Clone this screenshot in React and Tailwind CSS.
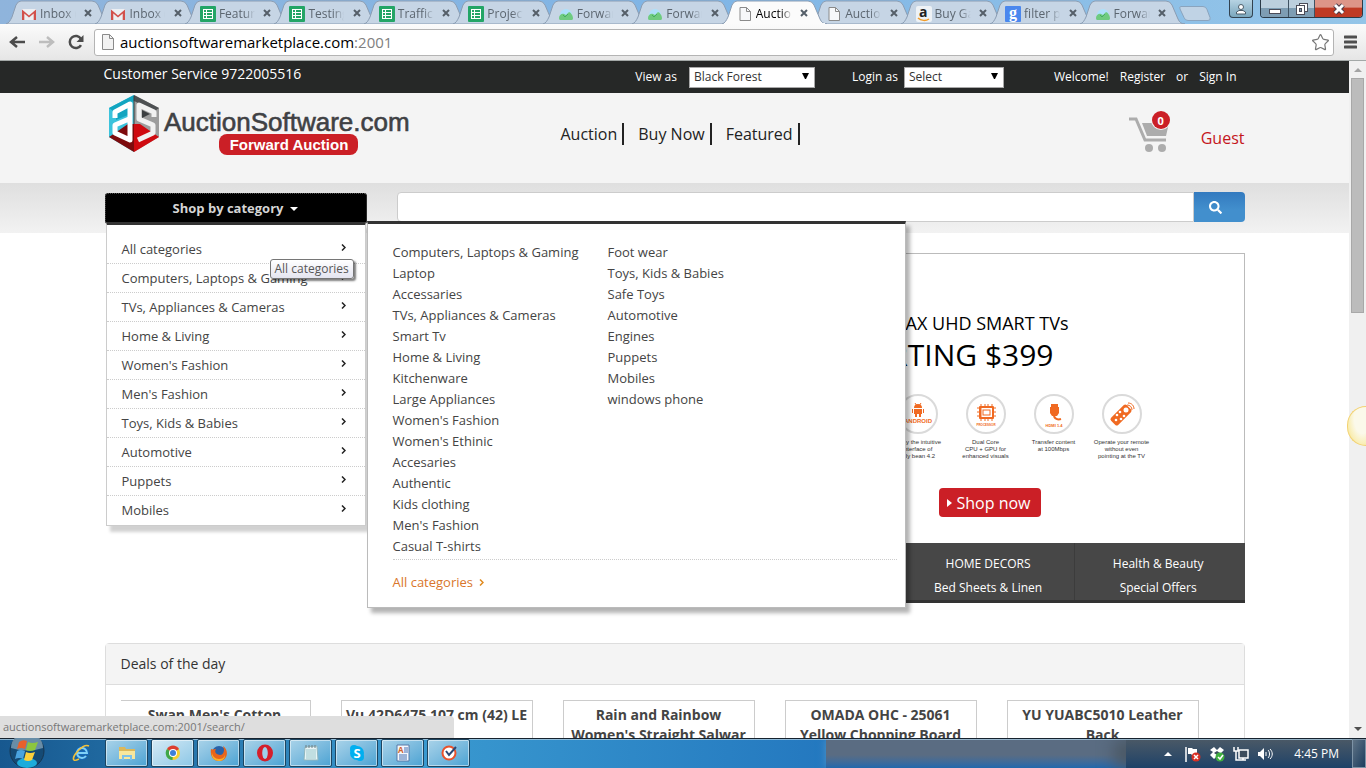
import { Star } from 'lucide-react'
import { FaSearch } from 'react-icons/fa'

const TABS = [
  { icon: 'gmail', label: 'Inbox (1)' },
  { icon: 'gmail', label: 'Inbox (1)' },
  { icon: 'sheet', label: 'Feature' },
  { icon: 'sheet', label: 'Testing' },
  { icon: 'sheet', label: 'Traffic' },
  { icon: 'sheet', label: 'Project' },
  { icon: 'hill', label: 'Forward' },
  { icon: 'hill', label: 'Forward' },
  { icon: 'page', label: 'Auction', active: true },
  { icon: 'page', label: 'Auction' },
  { icon: 'amazon', label: 'Buy Gar' },
  { icon: 'google', label: 'filter pl' },
  { icon: 'hill', label: 'Forward' },
]

const CATEGORIES = [
  'All categories',
  'Computers, Laptops & Gaming',
  'TVs, Appliances & Cameras',
  'Home & Living',
  "Women's Fashion",
  "Men's Fashion",
  'Toys, Kids & Babies',
  'Automotive',
  'Puppets',
  'Mobiles',
]

const MEGA_COLUMNS = [
  [
    'Computers, Laptops & Gaming',
    'Laptop',
    'Accessaries',
    'TVs, Appliances & Cameras',
    'Smart Tv',
    'Home & Living',
    'Kitchenware',
    'Large Appliances',
    "Women's Fashion",
    "Women's Ethinic",
    'Accesaries',
    'Authentic',
    'Kids clothing',
    "Men's Fashion",
    'Casual T-shirts',
  ],
  ['Foot wear', 'Toys, Kids & Babies', 'Safe Toys', 'Automotive', 'Engines', 'Puppets', 'Mobiles', 'windows phone'],
]

const DEALS = [
  ["Swan Men's Cotton", 'Shirt'],
  ['Vu 42D6475 107 cm (42) LE', 'TV'],
  ['Rain and Rainbow', "Women's Straight Salwar"],
  ['OMADA OHC - 25061', 'Yellow Chopping Board'],
  ['YU YUABC5010 Leather', 'Back'],
]

function TabIcon({ name }) {
  if (name === 'gmail')
    return (
      <svg width="16" height="16" viewBox="0 0 16 16">
        <rect x="1" y="3" width="14" height="11" fill="#eceff3" />
        <path d="M1 14V3.500l7 6 7-6V14h-2.300V7.500L8 11.500 3.300 7.500V14z" fill="#d2504b" />
      </svg>
    )
  if (name === 'sheet')
    return (
      <svg width="16" height="16" viewBox="0 0 16 16">
        <rect width="16" height="16" rx="1" fill="#23a566" />
        <path d="M3 3h10v10H3z" fill="#fff" />
        <path d="M4 4h2v2H4zM7 4h5v2H7zM4 7h2v2H4zM7 7h5v2H7zM4 10h2v2H4zM7 10h5v2H7z" fill="#23a566" />
      </svg>
    )
  if (name === 'hill')
    return (
      <svg width="16" height="16" viewBox="0 0 16 16">
        <path d="M2 9a6 6 0 0 1 12 0z" fill="#aee0fa" />
        <path d="M1 12c0-3 3-5 5-4l2 1 3-3c1 0 4 3 4 6 0 2-1 2-2 2H3c-1 0-2 0-2-2z" fill="#6fcb7f" />
        <path d="m5 9 2 2 3-3" fill="none" stroke="#45ad62" />
      </svg>
    )
  if (name === 'page')
    return (
      <svg width="16" height="16" viewBox="0 0 16 16">
        <path d="M3 1.500h6.500l4 4v9H3z" fill="#f7f8fa" stroke="#8a8a8a" />
        <path d="M9.500 1.500v4h4" fill="none" stroke="#8a8a8a" />
      </svg>
    )
  if (name === 'amazon')
    return (
      <svg width="16" height="16" viewBox="0 0 16 16">
        <rect width="16" height="16" rx="2" fill="#eef2f6" />
        <text x="3" y="11" fontSize="14" fontWeight="700" fontFamily="Open Sans, sans-serif" fill="#222">a</text>
        <path d="M2 12c3 3 8 3 11 1" fill="none" stroke="#f29b26" strokeWidth="1.500" />
      </svg>
    )
  return (
    <svg width="16" height="16" viewBox="0 0 16 16">
      <rect width="16" height="16" rx="1" fill="#4a87ee" />
      <text x="4" y="12" fontSize="16" fontWeight="700" fontFamily="Liberation Serif, serif" fill="#fff">g</text>
    </svg>
  )
}

function Tab({ icon, label, active }) {
  return (
    <div className={`relative flex items-center ${active ? 'z-10' : ''}`}>
      <svg className="absolute top-0 left-0 h-6 w-[106px]" viewBox="0 0 106 24" preserveAspectRatio="none">
        <path
          d="M0 24C3 23 4 21 6 17L10 5Q12 1 15 1H86Q90 1 92 5L98 19Q100 24 105 24Z"
          fill={active ? '#fbfbfb' : '#c6d5e5'}
          stroke="#8b9db3"
        />
        {active && <path d="M2 24H103" stroke="#fbfbfb" strokeWidth="2" />}
      </svg>
      <button className="relative flex w-full items-center pt-[3px] pl-[15px] text-left">
        <span className="shrink-0"><TabIcon name={icon} /></span>
        <span className={`ml-[3px] w-[36px] overflow-hidden text-[12px] leading-4 whitespace-nowrap [mask-image:linear-gradient(to_right,black_70%,transparent)] ${active ? 'text-black' : 'text-[#5c6670]'}`}>
          {label}
        </span>
      </button>
      <button aria-label="Close tab" className="absolute top-[9px] right-[3px]">
        <svg width="8" height="8" viewBox="0 0 8 8"><path d="m1 1 6 6m0-6L1 7" stroke="#555f69" strokeWidth="2" /></svg>
      </button>
    </div>
  )
}

function WindowButtons() {
  return (
    <div className="absolute top-0 right-[3px] flex items-start gap-[7px]">
      <button aria-label="User" className="grid h-[18px] w-6 place-items-center rounded-b border border-t-0 border-[#32424f] bg-linear-to-b from-[#b6d3e3] to-[#7ba7bd]">
        <svg width="12" height="12" viewBox="0 0 12 12">
          <path d="M1.500 11V9L4 7.500h4L10.500 9v2z" fill="#fff" stroke="#4b5c68" />
          <circle cx="6" cy="4" r="2.500" fill="#fff" stroke="#4b5c68" />
        </svg>
      </button>
      <div className="flex h-[18px] overflow-hidden rounded-b border border-t-0 border-[#2b3a47]">
        <button aria-label="Minimize" className="grid w-7 place-items-center border-r border-[#3f5262] bg-linear-to-b from-[#bccfdd] from-45% to-[#7e9db3] to-50%">
          <svg width="12" height="12" viewBox="0 0 12 12"><rect x="0.500" y="6.500" width="11" height="4" fill="#fff" stroke="#4b4c58" /></svg>
        </button>
        <button aria-label="Restore" className="grid w-[26px] place-items-center border-r border-[#3f5262] bg-linear-to-b from-[#bccfdd] from-45% to-[#7e9db3] to-50%">
          <svg width="12" height="12" viewBox="0 0 12 12" fill="#fff" stroke="#4b4c58">
            <rect x="3.500" y="0.500" width="8" height="8" />
            <rect x="0.500" y="2.500" width="8" height="9" />
            <rect x="3.500" y="5.500" width="2" height="3" fill="#7e9db3" />
          </svg>
        </button>
        <button aria-label="Close" className="grid w-[47px] place-items-center bg-linear-to-b from-[#dd9588] from-40% to-[#bf3a24] to-50%">
          <svg width="14" height="12" viewBox="0 0 14 12">
            <path d="m3 2 8 8m0-8-8 8" stroke="#4b3b48" strokeWidth="5" />
            <path d="m3 2 8 8m0-8-8 8" stroke="#fff" strokeWidth="3" />
          </svg>
        </button>
      </div>
    </div>
  )
}

function BrowserChrome() {
  return (
    <header className="shrink-0 border-b border-[#a3a8a7]">
      <div className="relative h-6 bg-linear-to-r from-[#8fb4dc] via-[#7fb5e6] to-[#94c5e8] pl-[6px]">
        <div className="grid h-6 w-[1163px] grid-cols-13">
          {TABS.map((t, i) => <Tab key={i} {...t} />)}
        </div>
        <button aria-label="New tab" className="absolute top-[6px] left-[1179px]">
          <svg width="32" height="15" viewBox="0 0 32 15">
            <path d="M2 .500h22q3 0 4 3l3 8q1 3-2 3H9q-3 0-4-3L1 3q-1-2.500 1-2.500z" fill="#c0d3e5" stroke="#8aa4be" />
          </svg>
        </button>
        <WindowButtons />
      </div>
      <div className="flex h-9 items-center bg-linear-to-b from-[#fbfbfb] to-[#e6e6e6] pr-[9px] pl-2">
        <button aria-label="Back">
          <svg width="18" height="16" viewBox="0 0 18 16"><path d="M17 8H3m6-5L3 8l6 5" fill="none" stroke="#4c4c4c" strokeWidth="2.500" /></svg>
        </button>
        <button aria-label="Forward" className="ml-3">
          <svg width="18" height="16" viewBox="0 0 18 16"><path d="M1 8h14M9 3l6 5-6 5" fill="none" stroke="#bdbdbd" strokeWidth="2.500" /></svg>
        </button>
        <button aria-label="Reload" className="ml-3">
          <svg width="16" height="16" viewBox="0 0 16 16">
            <path d="M13 11a6 6 0 1 1 0-6" fill="none" stroke="#4c4c4c" strokeWidth="2.500" />
            <path d="M15.500 1v7h-7z" fill="#4c4c4c" />
          </svg>
        </button>
        <div className="relative ml-[10px] h-[27px] flex-1 rounded-[3px] border border-[#b4b4b4] bg-white">
          <div className="flex h-full items-center pl-[5px]">
            <svg width="16" height="16" viewBox="0 0 16 16">
              <path d="M2.500.500h7l4 4v11h-11z" fill="#f2f2f2" stroke="#8a8a8a" />
              <path d="M9.500.500v4h4" fill="none" stroke="#8a8a8a" />
            </svg>
            <p className="ml-1 text-[15px] leading-5 text-black">
              auctionsoftwaremarketplace.com<span className="text-[#808080]">:2001</span>
            </p>
          </div>
          <button aria-label="Bookmark" className="absolute top-[3px] right-[3px]">
            <Star size={19} strokeWidth={1.5} color="#777" />
          </button>
        </div>
        <button aria-label="Menu" className="ml-[10px]">
          <svg width="13" height="14" viewBox="0 0 13 14"><path d="M1 2h11M1 7h11M1 12h11" stroke="#4f4f4f" strokeWidth="3" strokeLinecap="round" /></svg>
        </button>
      </div>
    </header>
  )
}

function TopSelect({ id, label, value, width, className }) {
  return (
    <div className={`flex items-center ${className}`}>
      <label htmlFor={id}>{label}</label>
      <div className={`relative ${width}`}>
        <select id={id} className="block h-[21px] w-full appearance-none border border-[#a9a9a9] bg-white pl-1 text-[12px] leading-4 text-[#333]">
          <option>{value}</option>
        </select>
        <svg className="pointer-events-none absolute top-[6px] right-[6px]" width="7" height="6" viewBox="0 0 7 6"><path d="M0 0h7L4 6H3z" /></svg>
      </div>
    </div>
  )
}

function TopBar() {
  return (
    <div className="bg-[#262827] text-white">
      <div className="mx-auto flex h-8 max-w-[1142px] items-center pr-[9px] text-[12px]">
        <p className="self-start pt-[3px] text-[14px] leading-5">Customer Service 9722005516</p>
        <div className="ml-auto flex items-center">
          <TopSelect id="view-as" label="View as" value="Black Forest" width="ml-3 w-[126px]" className="" />
          <TopSelect id="login-as" label="Login as" value="Select" width="ml-[6px] w-[100px]" className="ml-[37px]" />
          <span className="ml-[50px]">Welcome!</span>
          <a href="#register" className="ml-[11px]">Register</a>
          <span className="ml-[11px]">or</span>
          <a href="#signin" className="ml-[11px]">Sign In</a>
        </div>
      </div>
    </div>
  )
}

function Logo() {
  return (
    <svg width="310" height="62" viewBox="0 0 310 62" role="img" aria-label="AuctionSoftware.com Forward Auction">
      {/* hexagonal cube */}
      <path d="M29 0 4 13v29l25 15z" fill="#3cc3dc" />
      <path d="M29 0 4 13l4 3 21-10z" fill="#12a5c0" />
      <path d="M11 19l12-6v7l-12 5z" fill="#12a5c0" />
      <path d="M29 0l25 13v29L29 57z" fill="#9d9d9d" />
      <path d="M29 0l25 13-4 3-21-10z" fill="#4d5052" />
      <path d="M4 42l6-4 13-9h6v28z" fill="#7d0b0d" />
      <path d="M54 42l-6-4-13-9h-6v28z" fill="#cf0a10" />
      {/* letters folded over the two faces */}
      <path d="M10 23v-6l15-8v36l-15-7v-8l14-6" fill="none" stroke="#fff" strokeWidth="5" strokeLinejoin="round" />
      <path d="M49 22v-5L34 10v14l14 6v8l-15 7" fill="none" stroke="#f1f1f1" strokeWidth="5" strokeLinejoin="round" />
      <path d="M37 15l8 4-8 4z" fill="#3c3f41" />
      <path d="M29 1v28" stroke="#3a3a3a" />
      <text x="59" y="36" fontSize="26" fontFamily="Liberation Sans, Arial, sans-serif" fill="#3f4144" stroke="#3f4144" strokeWidth="0.600">
        AuctionSoftware.com
      </text>
      <rect x="114" y="39" width="139" height="21" rx="8" fill="#cb1f26" />
      <text x="184" y="55" textAnchor="middle" fontSize="15" fontWeight="700" fontFamily="Liberation Sans, Arial, sans-serif" fill="#fff">
        Forward Auction
      </text>
    </svg>
  )
}

function SiteHeader() {
  return (
    <div className="bg-[#f4f4f4]">
      <div className="mx-auto flex h-[90px] max-w-[1140px] items-start">
        <a href="#home" className="mt-[2px]"><Logo /></a>
        <nav className="mt-[30px] ml-[146px] flex gap-[14px] text-[16px] leading-[22px] text-[#222]">
          {['Auction', 'Buy Now', 'Featured'].map((item) => (
            <a key={item} href="#nav" className="border-r-2 border-[#222] pr-[5px]">{item}</a>
          ))}
        </nav>
        <a href="#cart" aria-label="Cart" className="relative mt-[18px] ml-auto">
          <svg width="42" height="43" viewBox="0 0 42 43">
            <path d="M0 8h7l9 21h21" fill="none" stroke="#acacac" strokeWidth="3" />
            <path d="M13 12h27l-3 13H18z" fill="#acacac" />
            <circle cx="20" cy="37" r="4" fill="#acacac" />
            <circle cx="33" cy="37" r="4" fill="#acacac" />
            <circle cx="32" cy="9" r="10" fill="#f4f4f4" />
          </svg>
          <span className="absolute top-0 right-px grid size-[18px] place-items-center rounded-full bg-[#cb1f26] text-[11px] leading-none font-bold text-white">0</span>
        </a>
        <a href="#account" className="mt-[34px] ml-[30px] text-[16px] leading-[22px] text-[#c4161c]">Guest</a>
      </div>
    </div>
  )
}

function Chevron({ color = '#222' }) {
  return (
    <svg width="5" height="7" viewBox="0 0 5 7"><path d="m1 .500 3 3-3 3" fill="none" stroke={color} strokeWidth="1.500" /></svg>
  )
}

function CategoryMenu() {
  return (
    <div className="relative">
      <button className="flex h-[31px] w-full items-center justify-center gap-[7px] rounded-[3px] border border-dotted border-[#555] bg-black text-[13px] font-bold text-[#d5d5d5]">
        Shop by category
        <svg width="8" height="4" viewBox="0 0 8 4"><path d="M0 0h8L4 4z" fill="#fff" /></svg>
      </button>
      <ul className="absolute top-[29px] left-[1px] z-20 w-[260px] border border-t-3 border-[#ccc] border-t-[#333] bg-white pt-[10px] pb-px shadow-[4px_6px_3px_rgba(0,0,0,0.18)]">
        {CATEGORIES.map((name) => (
          <li key={name} className="border-b border-dotted border-[#ccc] last:border-b-0">
            <a href="#category" className="flex h-7 items-start justify-between pt-1 pr-[19px] pl-[15px] text-[13px] leading-5 text-[#444]">
              {name}
              <span className="pt-[5px] leading-none"><Chevron /></span>
            </a>
          </li>
        ))}
      </ul>
      <div className="absolute top-7 left-[262px] z-20 w-[539px] border border-t-3 border-[#bbb] border-t-[#333] bg-white pt-[18px] pr-2 pb-[14px] pl-[25px] shadow-[4px_5px_4px_rgba(0,0,0,0.3)]">
        <div className="flex border-b border-dotted border-[#ccc] pb-[2px]">
          {MEGA_COLUMNS.map((column, i) => (
            <ul key={i} className="w-[215px] text-[13px] leading-[21px] text-[#444]">
              {column.map((name) => <li key={name}><a href="#category">{name}</a></li>)}
            </ul>
          ))}
        </div>
        <a href="#all" className="mt-[11px] flex items-center gap-[6px] text-[13px] leading-[22px] text-[#d9762b]">
          All categories <Chevron color="#e08a1e" />
        </a>
      </div>
      <span className="absolute top-[66px] left-[165px] z-30 rounded-[3px] border border-[#767676] bg-linear-to-b from-white to-[#e4e5f0] px-1 text-[12px] leading-[18px] whitespace-nowrap text-[#575757] shadow-[2px_2px_2px_rgba(0,0,0,0.5)]">
        All categories
      </span>
    </div>
  )
}

function SearchBand() {
  return (
    <div className="bg-linear-to-b from-[#dfdfdf] to-[#f2f2f2]">
      <div className="mx-auto grid h-[50px] max-w-[1140px] grid-cols-[262px_1fr] gap-[30px] pt-[10px]">
        <CategoryMenu />
        <form className="-mt-px flex h-[30px]">
          <input aria-label="Search" type="text" className="min-w-0 flex-1 rounded-l border border-[#ccc] bg-white px-3 text-[13px]" />
          <button type="button" aria-label="Search" className="grid w-[51px] place-items-center rounded-r bg-linear-to-b from-[#337abf] to-[#428fcd] to-60% pr-2 text-white">
            <FaSearch size={13} />
          </button>
        </form>
      </div>
    </div>
  )
}

const FEATURES = [
  { icon: 'android', lines: ['Enjoy the intuitive', 'interface of', 'jelly bean 4.2'] },
  { icon: 'cpu', lines: ['Dual Core', 'CPU + GPU for', 'enhanced visuals'] },
  { icon: 'hdmi', lines: ['Transfer content', 'at 100Mbps'] },
  { icon: 'remote', lines: ['Operate your remote', 'without even', 'pointing at the TV'] },
]

function FeatureIcon({ name }) {
  return (
    <svg width="42" height="42" viewBox="0 0 42 42" fill="#f06a22" fontFamily="Liberation Sans, sans-serif" fontWeight="700" textAnchor="middle">
      <circle cx="21" cy="21" r="19" fill="#fff" stroke="#dadada" strokeWidth="2" />
      {name === 'android' && (
        <>
          <path d="M17 15a4 4 0 0 1 8 0zM17 16h8v5h-8zM15 16h1v4h-1zM26 16h1v4h-1zM18 21h2v3h-2zM22 21h2v3h-2z" />
          <path d="m18 10 2 3m4-3-2 3" stroke="#f06a22" />
          <text x="21" y="30" fontSize="6">ANDROID</text>
        </>
      )}
      {name === 'cpu' && (
        <>
          <rect x="14" y="13" width="15" height="13" rx="1" />
          <rect x="16" y="15" width="11" height="9" fill="#fff" />
          <rect x="18" y="17" width="7" height="5" fill="none" stroke="#f06a22" />
          <path d="M16 11v17m4-17v2m3-2v2m4-2v2M20 26v2m3-2v2m4-2v2M12 15h2m-2 4h2m-2 4h2m15-8h2m-2 4h2m-2 4h2" stroke="#f06a22" />
          <text x="21" y="33" fontSize="3">PROCESSOR</text>
        </>
      )}
      {name === 'hdmi' && (
        <>
          <path d="M18 11h7v3h1v6l-2 3h-5l-2-3v-6h1z" />
          <path d="M21 22c0 4 4 5 7 4" fill="none" stroke="#f06a22" strokeWidth="2" />
          <text x="21" y="34" fontSize="4">HDMI 1.4</text>
        </>
      )}
      {name === 'remote' && (
        <>
          <rect x="15" y="11" width="10" height="22" rx="2" transform="rotate(45 20 22)" />
          <g fill="#fff">
            <circle cx="25" cy="17" r="2.500" /><circle cx="19" cy="19" r="1.300" /><circle cx="23" cy="23" r="1.300" />
            <circle cx="16" cy="22" r="1.300" /><circle cx="20" cy="26" r="1.300" /><circle cx="15" cy="27" r="1.300" />
          </g>
          <path d="M26 12c3 0 5 2 5 5M27 10c4 0 6 3 6 6" fill="none" stroke="#f06a22" />
        </>
      )}
    </svg>
  )
}

function Banner() {
  return (
    <div className="mx-auto mt-5 grid max-w-[1140px] grid-cols-[262px_1fr] gap-[30px]">
      <section className="col-start-2 h-[350px]">
        <div className="flex h-[290px] flex-col items-end border border-b-0 border-[#bbb] pt-[57px] text-black">
          <p className="mr-[175px] text-[18px] leading-6">MAX UHD SMART TVs</p>
          <p className="mr-[190px] text-[30px] leading-10">STARTING $399</p>
          <div className="mt-[18px] mr-[88px] grid grid-cols-[repeat(4,68px)]">
            {FEATURES.map((f) => (
              <div key={f.icon} className="flex flex-col items-center">
                <FeatureIcon name={f.icon} />
                <p className="mt-1 text-center font-['Liberation_Sans',Arial,sans-serif] text-[6px] leading-[7px] whitespace-nowrap text-[#333]">
                  {f.lines.map((line) => <span key={line} className="block">{line}</span>)}
                </p>
              </div>
            ))}
          </div>
          <button className="mt-7 mr-[203px] flex h-[29px] items-center gap-[5px] rounded bg-[#cb1f26] pr-[10px] pl-2 text-[16px] text-white">
            <svg width="5" height="8" viewBox="0 0 5 8"><path d="m0 0 5 4-5 4z" fill="#fff" /></svg>
            Shop now
          </button>
        </div>
        <div className="grid h-[60px] grid-cols-5 border-b-3 border-[#333] bg-[#474747] text-center text-[12px] leading-6 text-white">
          <div className="col-start-4 border-r border-[#3c3c3c] pt-[9px] pr-[3px]"><p>HOME DECORS</p><p>Bed Sheets &amp; Linen</p></div>
          <div className="pt-[9px] pr-[3px]"><p>Health &amp; Beauty</p><p>Special Offers</p></div>
        </div>
      </section>
    </div>
  )
}

function Deals() {
  return (
    <section className="mx-auto mt-10 max-w-[1140px] rounded-t border border-[#ddd]">
      <h2 className="border-b border-[#ddd] bg-[#f4f4f4] px-[15px] py-[10px] text-[14px] leading-5 text-[#333]">Deals of the day</h2>
      <div className="mx-[15px] overflow-hidden pt-[15px]">
        <div className="-ml-[2px] flex gap-[30px]">
          {DEALS.map(([first, second]) => (
            <article key={first} className="h-[280px] w-[192px] shrink-0 border border-[#ccc] pt-1 text-center text-[14px] leading-5 font-bold whitespace-nowrap text-[#444]">
              <p>{first}</p>
              <p>{second}</p>
            </article>
          ))}
        </div>
      </div>
    </section>
  )
}

function Scrollbar() {
  return (
    <div className="flex w-[17px] shrink-0 flex-col items-center bg-[#f0f0f0]">
      <svg className="mt-[7px]" width="8" height="4" viewBox="0 0 8 4"><path d="m0 4 4-4 4 4z" fill="#a3a3a3" /></svg>
      <div className="mt-[6px] h-[235px] w-[13px] border border-[#a8a8a8] bg-[#bcbcbc]" />
      <svg className="mt-auto mb-[7px]" width="8" height="4" viewBox="0 0 8 4"><path d="m0 0 4 4 4-4z" fill="#505050" /></svg>
    </div>
  )
}

function TaskIcon({ name }) {
  return (
    <svg width="18" height="18" viewBox="0 0 18 18">
      {name === 'ie' && (
        <>
          <path d="M14 12a5 5 0 1 1 1-3H6" fill="none" stroke="#1568b8" strokeWidth="4" />
          <path d="M14 12a5 5 0 1 1 1-3H6" fill="none" stroke="#7fd0f7" strokeWidth="2" />
          <path d="M2 16C-1 13 11-1 17 2M2 16c1 1 3 0 5-1" fill="none" stroke="#f3c13a" strokeWidth="1.500" />
        </>
      )}
      {name === 'explorer' && (
        <>
          <path d="M1 3h6l1 2h9v10H1z" fill="#dcb85a" />
          <path d="M1 7h16v8H1z" fill="#f8e79d" />
          <path d="M4 16v-5h10v5h-2v-3H6v3z" fill="#7ec2ea" />
        </>
      )}
      {name === 'chrome' && (
        <>
          <circle cx="9" cy="9" r="7" fill="#f6cf30" />
          <path d="M9 9 3 5a7 7 0 0 1 12 0z" fill="#dc3d30" />
          <path d="M9 9 8.500 16A7 7 0 0 1 3 5z" fill="#3fa748" />
          <circle cx="9" cy="9" r="4" fill="#fff" />
          <circle cx="9" cy="9" r="3" fill="#3d7fd9" />
        </>
      )}
      {name === 'firefox' && (
        <>
          <circle cx="9" cy="9" r="7" fill="#2a62a8" />
          <path d="M1 5c2 1 3 0 5 0-2 3 0 6 4 6 2 0 4-2 4-5 0-2-1-3-1-4 7 5 4 15-4 15C2 17 0 10 1 5z" fill="#e8641b" />
          <path d="M2 8c0 4 3 7 7 7 3 0 5-1 6-4 0 4-3 6-6 6-5 0-8-4-7-9z" fill="#f6b32d" />
        </>
      )}
      {name === 'opera' && (
        <>
          <ellipse cx="9" cy="9" rx="8" ry="8.500" fill="#d41f2c" />
          <ellipse cx="9" cy="9" rx="2.800" ry="6" fill="#9ed1ec" />
        </>
      )}
      {name === 'notepad' && (
        <>
          <path d="m3 3 12-1 1 14H2z" fill="#e8f4f5" stroke="#90b6bd" />
          <path d="M4 6h10M4 8h10M4 10h10M4 12h10M4 14h10" stroke="#9ac8cd" />
          <path d="M4 1v3m3-3v3m3-3v3m3-3v3" stroke="#6d7f86" />
        </>
      )}
      {name === 'skype' && (
        <>
          <circle cx="9" cy="9" r="7" fill="#00aff0" /><circle cx="6" cy="5" r="4" fill="#00aff0" /><circle cx="12" cy="13" r="4" fill="#00aff0" />
          <text x="9" y="14" fontSize="13" fontWeight="700" textAnchor="middle" fontFamily="Open Sans, sans-serif" fill="#fff">S</text>
        </>
      )}
      {name === 'wordpad' && (
        <>
          <path d="M3 1h12v16H3z" fill="#f4f8fd" stroke="#5678a8" />
          <text x="4" y="9" fontSize="8" fontWeight="700" fontFamily="Open Sans, sans-serif" fill="#d0622b">A</text>
          <path d="M10 4h4M10 6h4M10 8h4M5 11h8M5 13h8M5 15h8" stroke="#4671b3" />
        </>
      )}
      {name === 'clock' && (
        <>
          <circle cx="9" cy="9" r="6.500" fill="#fff" stroke="#e8522c" strokeWidth="2" />
          <path d="m6 7 3 4 7-8" fill="none" stroke="#2b4875" strokeWidth="2" />
        </>
      )}
    </svg>
  )
}

function Taskbar() {
  return (
    <footer className="relative flex h-[30px] shrink-0 items-stretch border-t border-[#16222e]">
      {/* wallpaper showing through the glass, with the darker window area on the right */}
      <div className="absolute inset-0 flex overflow-hidden">
        <div className="w-[826px] bg-linear-to-r from-[#17588f] via-[#3a9ad0] via-50% to-[#2478bf]" />
        <div className="flex-1 bg-linear-to-b from-[#5a6c82] from-55% to-[#2068ac] shadow-[0_0_8px_#5095c8]" />
        <div className="w-[240px] bg-linear-to-b from-[#4b5966] to-[#1d4268] shadow-[-12px_0_16px_#4b5966]" />
      </div>
      <div className="absolute inset-x-0 top-0 h-px bg-[#a9cbe0]/80" />
      <button aria-label="Start" className="absolute -top-[6px] left-[9px]">
        <svg width="36" height="36" viewBox="0 0 36 36">
          <circle cx="18" cy="18" r="17" fill="#154a74" stroke="#173650" />
          <path d="M2 15a16 16 0 0 1 32 0Q18 20 2 15z" fill="#8ba9bd" opacity="0.700" />
          <ellipse cx="18" cy="30" rx="10" ry="5" fill="#1fc4f5" opacity="0.800" />
          <path d="M10 9q4-3 8-1l-2 8q-4-2-8 0z" fill="#e8612c" />
          <path d="M19 9q4 2 10 0l-3 8q-5 2-9 0z" fill="#8cc63f" />
          <path d="M8 18q4-2 8 0l-2 8q-4-2-8 0z" fill="#4aa3df" />
          <path d="M17 19q4 2 9 0l-3 8q-4 2-8 0z" fill="#fcd03b" />
        </svg>
      </button>
      <div className="relative ml-[59px] flex gap-[3px] pb-px">
        <button aria-label="Internet Explorer" className="grid w-[43px] place-items-center"><TaskIcon name="ie" /></button>
        {['explorer', 'chrome', 'firefox', 'opera', 'notepad', 'skype', 'wordpad', 'clock'].map((name) => (
          <button
            key={name}
            aria-label={name}
            className={`grid w-[43px] place-items-center rounded-[2px] border border-[#1d4560] bg-linear-to-br inset-ring inset-ring-white/50 ${name === 'chrome' ? 'from-[#d5eaf5] to-[#8cc7e6]' : 'from-[#a9d3e9] to-[#4aa3d3]'}`}
          >
            <TaskIcon name={name} />
          </button>
        ))}
      </div>
      <div className="relative ml-auto flex items-center text-white">
        <svg width="8" height="4" viewBox="0 0 8 4"><path d="m0 4 4-4 4 4z" fill="#fff" /></svg>
        <svg className="ml-[13px]" width="16" height="16" viewBox="0 0 16 16">
          <path d="M1 1v15" stroke="#fff" strokeWidth="1.500" />
          <path d="M3 2h4l1 1h4v6H7L6 8H3z" fill="#fff" />
          <circle cx="11" cy="11" r="4.500" fill="#d93025" />
          <path d="m9 9 4 4m0-4-4 4" stroke="#fff" strokeWidth="1.500" />
        </svg>
        <svg className="ml-2" width="16" height="16" viewBox="0 0 16 16">
          <path d="m1 4 4-3 3 3 3-3 4 3-3 3 3 3-4 2-3-2-3 3-4-4 3-3z" fill="#fff" />
          <path d="m5 7 3-2 3 2-3 2z" fill="#3c4c5c" />
          <circle cx="11" cy="11" r="4.500" fill="#3fae3f" />
          <path d="m9 11 2 2 3-4" fill="none" stroke="#fff" strokeWidth="1.500" />
        </svg>
        <svg className="ml-2" width="16" height="16" viewBox="0 0 16 16">
          <rect x="6" y="4" width="9" height="8" fill="#3c4c5c" stroke="#fff" strokeWidth="1.500" />
          <path d="M1 1v4h4V1M3 5v9h10M10 12v2" fill="none" stroke="#fff" strokeWidth="1.500" />
        </svg>
        <svg className="ml-2" width="16" height="16" viewBox="0 0 16 16">
          <path d="M1 6h2l4-4v12l-4-4H1z" fill="#fff" />
          <path d="M9 6v4M11 4c2 2 2 6 0 8M13 3c3 3 3 7 0 10" fill="none" stroke="#fff" />
        </svg>
        <time className="ml-[21px] text-[12px]">4:45 PM</time>
        <button aria-label="Show desktop" className="ml-[13px] h-full w-[14px] border border-[#7d93a6] bg-linear-to-br from-[#5f7385] to-[#1c3d5e]" />
      </div>
    </footer>
  )
}

export default function App() {
  return (
    <div className="flex h-screen flex-col overflow-hidden bg-white font-['Open_Sans','Noto_Sans',sans-serif]">
      <BrowserChrome />
      <div className="relative flex min-h-0 flex-1">
        <main className="min-w-0 flex-1 overflow-hidden">
          <TopBar />
          <SiteHeader />
          <SearchBand />
          <Banner />
          <Deals />
        </main>
        <Scrollbar />
        <div className="absolute top-[345px] right-0 z-30 h-10 w-[19px] rounded-l-full border border-r-0 border-[#f3d271] bg-radial-[at_80%_30%] from-[#fbf9ea] from-40% to-[#f7e27c]" />
        <div className="absolute bottom-0 left-0 z-40 h-[22px] w-[454px] rounded-tr bg-[#dedede] pl-[3px] text-[11px] leading-[22px] text-[#777]">
          auctionsoftwaremarketplace.com:2001/search/
        </div>
      </div>
      <Taskbar />
    </div>
  )
}
